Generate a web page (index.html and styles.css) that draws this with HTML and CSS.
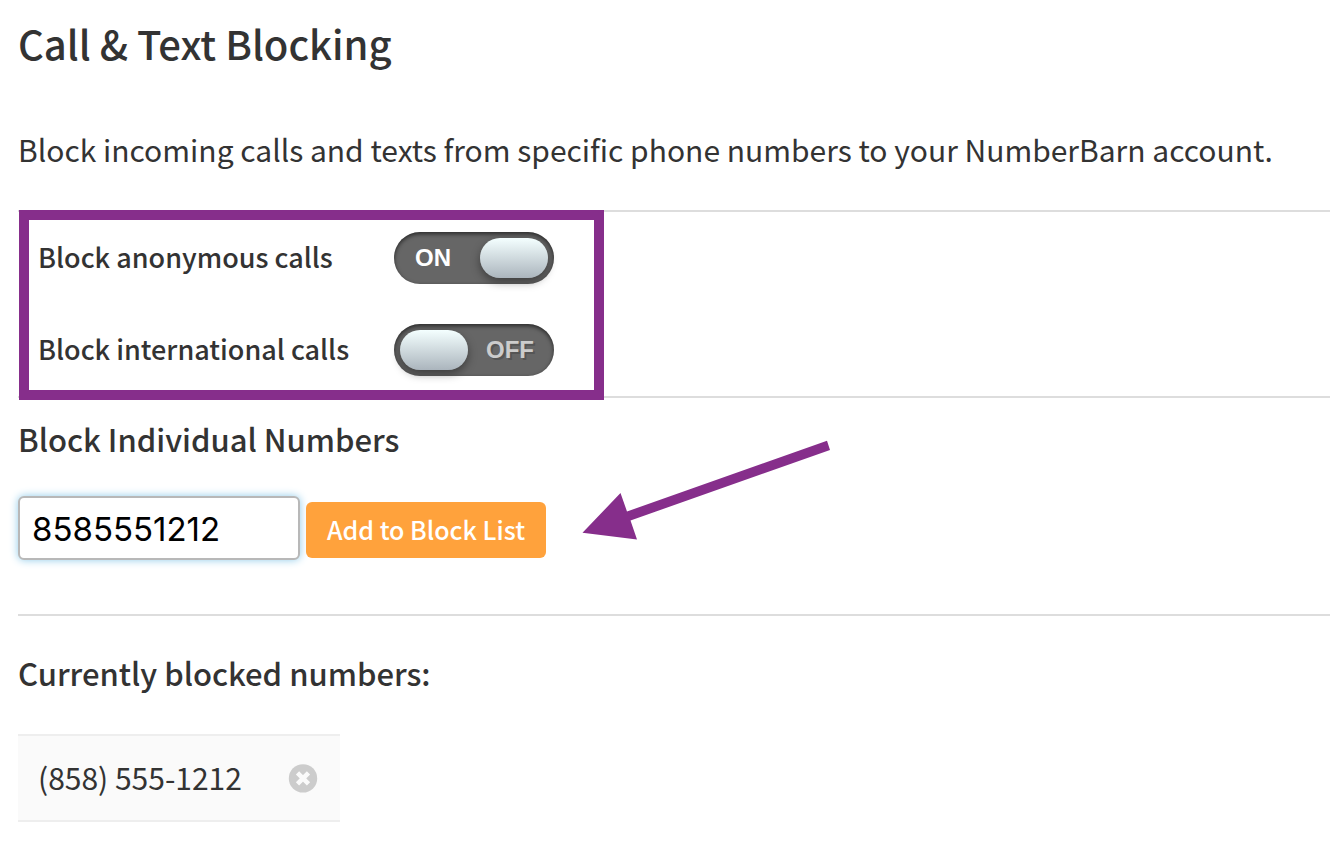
FILE: index.html
```html
<!DOCTYPE html>
<html lang="en">
<head>
    <meta charset="UTF-8">
    <meta name="viewport" content="width=device-width, initial-scale=1.0">
    <title>Call &amp; Text Blocking</title>
    <link rel="stylesheet" href="styles.css">
</head>
<body>
    <main class="container">
        <h1>Call &amp; Text Blocking</h1>
        <p class="intro">Block incoming calls and texts from specific phone numbers to your NumberBarn account.</p>

        <section class="settings">
            <div class="setting-row">
                <label for="block-anonymous">Block anonymous calls</label>
                <div class="switch">
                    <input type="checkbox" id="block-anonymous" checked>
                    <span class="switch-text">ON</span>
                </div>
            </div>
            <div class="setting-row">
                <label for="block-international">Block international calls</label>
                <div class="switch">
                    <input type="checkbox" id="block-international">
                    <span class="switch-text">OFF</span>
                </div>
            </div>
            <div class="highlight"></div>
        </section>

        <section class="individual">
            <h2><label for="number">Block Individual Numbers</label></h2>
            <form class="add-form" onsubmit="return false">
                <input type="text" id="number" value="8585551212">
                <button type="submit" class="add-btn">Add to Block List</button>
            </form>
            <svg class="arrow" width="250" height="100" viewBox="0 0 250 100" aria-hidden="true">
                <path d="M2.500 92.800 40.500 53 47 71.500 247 0.800 250 10 50.500 80.500 57 99.500Z" fill="#862e8b"/>
            </svg>
        </section>

        <section class="blocked">
            <h2>Currently blocked numbers:</h2>
            <ul class="blocked-list">
                <li>
                    <span>(858) 555-1212</span>
                    <button type="button" class="remove-btn" aria-label="Remove (858) 555-1212">
                        <svg width="30" height="30" viewBox="0 0 30 30">
                            <circle cx="15" cy="15.400" r="14.200" fill="#ccc"/>
                            <path d="M9.500 9.900 20.500 20.900M20.500 9.900 9.500 20.900" stroke="#fafafa" stroke-width="4.600"/>
                        </svg>
                    </button>
                </li>
            </ul>
        </section>
    </main>

    <script>
        document.querySelectorAll('.switch input').forEach(function (input) {
            input.addEventListener('change', function () {
                input.nextElementSibling.textContent = input.checked ? 'ON' : 'OFF';
            });
        });
    </script>
</body>
</html>
```
FILE: styles.css
```css
* {
    box-sizing: border-box;
}
body {
    margin: 0;
    background: #fff;
    color: #333;
    font-family: "Source Sans Pro", "Noto Sans CJK SC", sans-serif;
    font-size: 30px;
    line-height: 48px;
}
.container {
    padding: 13px 0 22px 18px;
}
h1 {
    margin: 0;
    font-size: 40px;
    font-weight: 500;
    line-height: 60px;
}
h2 {
    margin: 0;
    font-size: 31px;
    font-weight: 500;
}
.intro {
    margin: 52px 0 37px;
}

/* on/off settings */
.settings {
    position: relative;
    display: flex;
    flex-direction: column;
    gap: 40px;
    padding: 20px;
    border-top: 2px solid #ddd;
    border-bottom: 2px solid #ddd;
}
.setting-row {
    display: flex;
    align-items: center;
    height: 52px;
}
.setting-row label {
    width: 356px;
    padding-bottom: 2px;
    font-size: 27px;
    font-weight: 500;
}
.switch {
    position: relative;
    width: 160px;
    height: 52px;
}
.switch input {
    appearance: none;
    display: block;
    width: 100%;
    height: 100%;
    margin: 0;
    border-radius: 26px;
    background: #666;
    box-shadow: inset 0 2px 4px rgba(0,0,0,0.6);
    cursor: pointer;
}
.switch input::before {
    content: "";
    position: absolute;
    top: 6px;
    left: 6px;
    width: 68px;
    height: 40px;
    border-radius: 20px;
    background: linear-gradient(#f4ffff, #abb5bd);
    box-shadow: 0 4px 10px rgba(0,0,0,0.4);
}
.switch input:checked::before {
    left: 86px;
}
.switch-text {
    position: absolute;
    top: 0;
    right: 20px;
    color: #ccc;
    font: bold 24px/52px "Liberation Sans", Arial, sans-serif;
    text-shadow: 2px 2px 0 #555;
    pointer-events: none;
}
.switch input:checked + .switch-text {
    right: auto;
    left: 21px;
    color: #fff;
    text-shadow: none;
}
.highlight {
    position: absolute;
    top: -2px;
    left: 1px;
    width: 585px;
    height: 190px;
    border: 10px solid #862e8b;
    pointer-events: none;
}

/* add a number */
.individual {
    position: relative;
    padding: 17px 0 54px;
    border-bottom: 2px solid #ddd;
}
.add-form {
    display: flex;
    align-items: center;
    gap: 6px;
    margin-top: 33px;
}
.add-form input {
    width: 282px;
    height: 64px;
    padding: 2px 12px 0;
    border: 2px solid #b8b8b8;
    border-radius: 6px;
    outline: none;
    background: #fff;
    box-shadow: 0 0 8px #8fcbea;
    color: #000;
    font-family: Inter, sans-serif;
    font-size: 33px;
}
.add-btn {
    width: 240px;
    height: 56px;
    margin-top: 4px;
    padding: 0 0 2px;
    border: 0;
    border-radius: 6px;
    background: #ffa23c;
    color: #fff;
    font-family: inherit;
    font-size: 25px;
    font-weight: 500;
    cursor: pointer;
}
.arrow {
    position: absolute;
    top: 42px;
    left: 562px;
}

/* blocked numbers */
.blocked {
    padding-top: 33px;
}
.blocked-list {
    margin: 37px 0 0;
    padding: 0;
    list-style: none;
}
.blocked-list li {
    display: flex;
    align-items: center;
    justify-content: space-between;
    width: 322px;
    height: 88px;
    padding: 0 22px 0 20px;
    border-top: 2px solid #eee;
    border-bottom: 2px solid #eee;
    background: #fafafa;
}
.blocked-list span {
    padding-bottom: 2px;
}
.remove-btn {
    width: 30px;
    height: 30px;
    padding: 0;
    border: 0;
    background: none;
    cursor: pointer;
}
.remove-btn svg {
    display: block;
}
```
